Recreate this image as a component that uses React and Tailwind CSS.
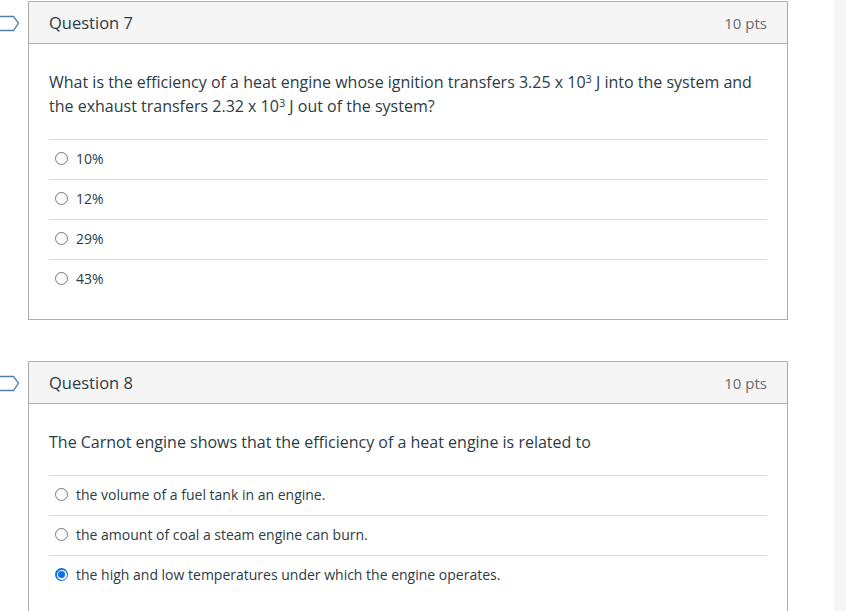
import React from "react";

function Flag() {
  return (
    <svg width="22" height="18" viewBox="0 0 22 18" className="absolute left-0 top-[14px]">
      <path d="M-1 1.5 H13.5 L18.5 8 L13.5 15.5 H-1" fill="none" stroke="#4f7fa6" strokeWidth="1.3" />
    </svg>
  );
}

function Radio({ checked }) {
  if (checked) {
    return (
      <span className="w-[13px] h-[13px] rounded-full bg-[#0b6fe6] flex items-center justify-center shrink-0">
        <span className="w-[10px] h-[10px] rounded-full bg-white flex items-center justify-center">
          <span className="w-[7px] h-[7px] rounded-full bg-[#0b6fe6]" />
        </span>
      </span>
    );
  }
  return <span className="w-[13px] h-[13px] rounded-full border border-[#767676] bg-white shrink-0" />;
}

function Question({ num, text, options, checkedIndex, last }) {
  return (
    <div className={"relative " + (last ? "" : "mb-[41px]")}>
      <Flag />
      <div className="ml-[28px] w-[760px] border border-[#aeaeae] bg-white">
        <div className="h-[42px] bg-[#f5f5f5] border-b border-[#aeaeae] flex items-center justify-between px-[20px] pt-[2px]">
          <span className="text-[16.5px] text-[#2d3b45]">{`Question ${num}`}</span>
          <span className="text-[15px] text-[#6b6b6b]">10 pts</span>
        </div>
        <div className="px-[20px] pt-[26px] pb-[20px]">
          <div className="text-[16px] leading-[24px] text-[#2d3b45] mb-[21px]">{text}</div>
          {options.map((o, i) => (
            <div key={i} className="h-[40px] border-t border-[#dcdcdc] flex items-center pl-[6px] pb-[2px] gap-[8px] text-[14px] text-[#2d3b45]">
              <Radio checked={i === checkedIndex} />
              <span>{o}</span>
            </div>
          ))}
        </div>
      </div>
    </div>
  );
}

export default function App() {
  return (
    <div className="relative w-[846px] h-[611px] overflow-hidden bg-white" style={{ fontFamily: '"Open Sans", sans-serif' }}>
      <div className="absolute right-0 top-0 w-[12px] h-full bg-[#f5f5f5]" />
      <div className="pt-[1px]">
        <Question
          num={7}
          text={
            <>
              What is the efficiency of a heat engine whose ignition transfers 3.25 x 10<sup className="text-[11px]">3</sup> J into the system and the exhaust transfers 2.32 x 10<sup className="text-[11px]">3</sup> J out of the system?
            </>
          }
          options={["10%", "12%", "29%", "43%"]}
          checkedIndex={-1}
        />
        <Question
          num={8}
          text="The Carnot engine shows that the efficiency of a heat engine is related to"
          options={[
            "the volume of a fuel tank in an engine.",
            "the amount of coal a steam engine can burn.",
            "the high and low temperatures under which the engine operates.",
          ]}
          checkedIndex={2}
          last
        />
      </div>
    </div>
  );
}
